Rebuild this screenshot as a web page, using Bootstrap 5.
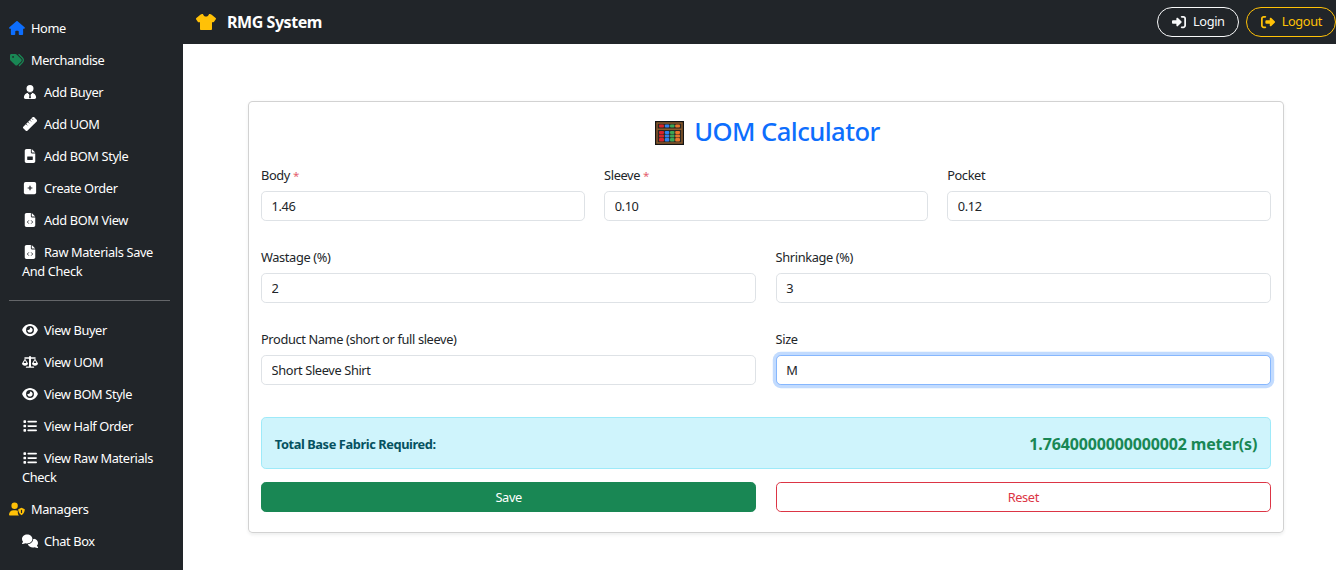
<!DOCTYPE html>
<html lang="en">
<head>
<meta charset="utf-8">
<title>RMG System</title>
<link href="https://cdn.jsdelivr.net/npm/bootstrap@5.3.0/dist/css/bootstrap.min.css" rel="stylesheet">
<style>
html{font-size:12.8px}
body{font-family:"Noto Sans","Open Sans","Liberation Sans",sans-serif;font-size:1rem;color:#212529;background:#fff}
.app-shell{display:flex;align-items:flex-start}
.side-panel{width:183px;flex:none;padding:12.8px 13px 12px 9px;color:#fff}
.side-link{display:block;color:#fff;text-decoration:none;padding:6.4px 0;line-height:19.2px;letter-spacing:-.37px}
.side-sub{padding-left:13px}
.ico{display:inline-block;width:16px;height:14px;margin-right:6px;vertical-align:-2px;fill:currentColor}
.side-rule{margin:12px 0 13.6px;border-color:#fff;opacity:.3}
.main-col{flex:1;min-width:0}
.top-bar{height:44px;padding:0 0 0 13px}
.brand-text{font-size:16px;font-weight:700;color:#fff;letter-spacing:-.45px}
.brand-ico{width:20px;height:16px;margin-right:11px;fill:#ffc107;vertical-align:-2px}
.btn-round{border-radius:50rem;height:30.4px;padding:0 13px;display:inline-flex;align-items:center;letter-spacing:-.4px}
.btn-round .ico{margin-right:6px}
.bar-actions{gap:7px}
.page-area{padding:57px 52px 0 65px}
.calc-card{padding:12.8px 12px 20px}
.calc-title{font-size:25.6px;font-weight:500;line-height:34px;margin-bottom:17px;padding-left:3px;color:#0d6efd;letter-spacing:-.55px}
.abacus{width:29px;height:24px;margin-right:10px;vertical-align:-4px}
.calc-label{margin-bottom:6.4px;letter-spacing:-.37px}
.calc-row{margin-bottom:26.4px}
.req{color:#e4606d;font-size:.9em}
.form-control{letter-spacing:-.37px;color:#212529;height:30px;min-height:30px}
.is-focus{border-color:#86b7fe;box-shadow:0 0 0 .25rem rgba(13,110,253,.25)}
.result-box{margin-top:32px;display:flex;justify-content:space-between;align-items:center;height:52px;padding-top:0;padding-bottom:0}
.result-key{font-weight:700;letter-spacing:-.4px;color:#055160;padding-top:2px}
.result-val{font-size:16px;font-weight:700;color:#198754;letter-spacing:-.15px;padding-top:1px}
.btn{letter-spacing:-.37px}
.row-last .btn{height:30px;padding-top:1px;padding-bottom:0}
</style>
</head>
<body>
<svg width="0" height="0" class="d-none">
<symbol id="i-house" viewBox="0 0 576 512"><path d="M575.8 255.5c0 18-15 32.100-32 32.100h-32l.7 160.200c0 2.700-.2 5.400-.5 8.100V472c0 22.100-17.900 40-40 40H456c-1.100 0-2.200 0-3.300-.1c-1.400 .1-2.800 .1-4.200 .1H392c-22.100 0-40-17.900-40-40V384c0-17.700-14.300-32-32-32H256c-17.700 0-32 14.300-32 32v88c0 22.100-17.900 40-40 40H128.100c-1.500 0-3-.1-4.500-.2c-1.200 .1-2.400 .2-3.600 .2H104c-22.100 0-40-17.900-40-40V360c0-.9 0-1.900 .1-2.800V287.600H32c-18 0-32-14-32-32.100c0-9 3-17 10-24L266.400 8c7-7 15-8 22-8s15 2 21 7L564.800 231.500c8 7 12 15 11 24z"/></symbol>
<symbol id="i-tags" viewBox="0 0 512 512"><path d="M345 39.100L472.800 168.400c52.400 53 52.400 138.200 0 191.200L360.800 472.900c-9.300 9.400-24.500 9.500-33.900 .2s-9.500-24.500-.2-33.900L438.600 325.900c33.900-34.300 33.900-89.400 0-123.700L310.900 72.900c-9.300-9.400-9.200-24.600 .2-33.900s24.600-9.200 33.900 .2zM0 229.500V80C0 53.500 21.500 32 48 32H197.500c17 0 33.300 6.700 45.300 18.700l168 168c25 25 25 65.500 0 90.500L277.300 442.700c-25 25-65.500 25-90.500 0l-168-168C6.700 262.700 0 246.500 0 229.500zM144 144a32 32 0 1 0 -64 0 32 32 0 1 0 64 0z"/></symbol>
<symbol id="i-user" viewBox="0 0 448 512"><path d="M224 256a128 128 0 1 0 0-256 128 128 0 1 0 0 256zM60 512c-33 0-60-27-60-60 0-90 70-164 158-172h132c88 8 158 82 158 172 0 33-27 60-60 60z"/><path d="M150 292l74 70 74-70M224 362l-22 110h44z" stroke="#212529" stroke-width="26" fill="#212529"/></symbol>
<symbol id="i-ruler" viewBox="0 0 512 512"><path d="M12 352 352 12c16-16 42-16 58 0l90 90c16 16 16 42 0 58L160 500c-16 16-42 16-58 0l-90-90c-16-16-16-42 0-58z"/><path d="M110 254l50 50M180 184l50 50M250 114l50 50M320 54l50 50" stroke="#212529" stroke-width="26" fill="none"/></symbol>
<symbol id="i-file" viewBox="0 0 384 512"><path d="M64 0C28.700 0 0 28.700 0 64V448c0 35.300 28.700 64 64 64H320c35.300 0 64-28.700 64-64V160H256c-17.700 0-32-14.300-32-32V0H64zM256 0V128H384L256 0z"/><rect x="90" y="270" width="204" height="130" rx="14" fill="#212529"/></symbol>
<symbol id="i-plus" viewBox="0 0 448 512"><rect y="32" width="448" height="448" rx="64"/><path d="M224 170v172M138 256h172" stroke="#212529" stroke-width="44" fill="none"/></symbol>
<symbol id="i-code" viewBox="0 0 384 512"><path d="M64 0C28.700 0 0 28.700 0 64V448c0 35.300 28.700 64 64 64H320c35.300 0 64-28.700 64-64V160H256c-17.700 0-32-14.300-32-32V0H64zM256 0V128H384L256 0z"/><path d="M150 270l-56 60 56 60M234 270l56 60-56 60" stroke="#212529" stroke-width="30" fill="none"/></symbol>
<symbol id="i-eye" viewBox="0 0 576 512"><path d="M288 32c-80.800 0-145.500 36.800-192.600 80.600C48.600 156 17.300 208 2.500 243.700c-3.300 7.900-3.300 16.700 0 24.600C17.300 304 48.600 356 95.400 399.400C142.500 443.200 207.200 480 288 480s145.500-36.800 192.600-80.600c46.800-43.500 78.100-95.400 93-131.100c3.300-7.900 3.300-16.700 0-24.600c-14.900-35.700-46.200-87.700-93-131.100C433.500 68.800 368.800 32 288 32zM144 256a144 144 0 1 1 288 0 144 144 0 1 1 -288 0zm144-64c0 35.300-28.700 64-64 64c-7.100 0-13.900-1.200-20.300-3.300c-5.500-1.800-11.900 1.600-11.700 7.400c.3 6.900 1.300 13.800 3.200 20.700c13.700 51.200 66.400 81.600 117.600 67.900s81.600-66.400 67.900-117.600c-11.100-41.500-47.800-69.400-88.600-71.100c-5.800-.2-9.200 6.100-7.400 11.700c2.100 6.400 3.300 13.200 3.300 20.300z"/></symbol>
<symbol id="i-scale" viewBox="0 0 640 512"><path d="M280 30h80v410h100c15 0 25 10 25 30v20H155v-20c0-20 10-30 25-30h100z"/><path d="M120 70h400c18 0 30 12 30 28s-12 28-30 28H120c-18 0-30-12-30-28s12-28 30-28z"/><path d="M120 120 0 320c0 50 55 84 120 84s120-34 120-84zm0 70 56 110H64zM520 120 400 320c0 50 55 84 120 84s120-34 120-84zm0 70 56 110H464z" fill-rule="evenodd"/></symbol>
<symbol id="i-list" viewBox="0 0 512 512"><path d="M40 48C26.700 48 16 58.700 16 72v48c0 13.300 10.700 24 24 24H88c13.300 0 24-10.700 24-24V72c0-13.300-10.700-24-24-24H40zM192 64c-17.700 0-32 14.300-32 32s14.300 32 32 32H480c17.700 0 32-14.300 32-32s-14.300-32-32-32H192zm0 160c-17.700 0-32 14.300-32 32s14.300 32 32 32H480c17.700 0 32-14.300 32-32s-14.300-32-32-32H192zm0 160c-17.700 0-32 14.300-32 32s14.300 32 32 32H480c17.700 0 32-14.300 32-32s-14.300-32-32-32H192zM16 232v48c0 13.300 10.700 24 24 24H88c13.300 0 24-10.700 24-24V232c0-13.300-10.700-24-24-24H40c-13.300 0-24 10.700-24 24zM40 368c-13.300 0-24 10.700-24 24v48c0 13.300 10.700 24 24 24H88c13.300 0 24-10.700 24-24V392c0-13.300-10.700-24-24-24H40z"/></symbol>
<symbol id="i-shield" viewBox="0 0 640 512"><path d="M224 256a128 128 0 1 0 0-256 128 128 0 1 0 0 256zM178 304h92c30 0 58 8 82 22v66c0 48 18 90 50 120H30c-17 0-30-13-30-30 0-98 80-178 178-178z"/><path d="M500 210l130 52c6 80-30 190-130 240-100-50-136-160-130-240z"/><path d="M500 290v130" stroke="#212529" stroke-width="46" fill="none"/></symbol>
<symbol id="i-chat" viewBox="0 0 640 512"><path d="M208 352c115 0 208-78 208-176S323 0 208 0 0 78 0 176c0 40 15 76 42 106-12 32-38 60-38 60-6 6-7 14-4 22s10 12 18 12c46 0 84-15 110-32 25 5 52 8 80 8z"/><path d="M448 176c0 112-99 199-216 207 25 76 105 129 200 129 28 0 55-3 80-10 26 17 64 32 110 32 8 0 15-4 18-12s2-16-4-22c0 0-26-28-38-60 27-30 42-66 42-106 0-82-66-150-156-172 2 5 2 9 2 14z"/></symbol>
<symbol id="i-shirt" viewBox="0 0 640 512"><path d="M211.800 0c7.800 0 14.300 5.700 16.700 13.200C240.800 51.900 277.100 80 320 80s79.200-28.100 91.500-66.800C413.900 5.700 420.400 0 428.200 0h12.600c22.500 0 44.200 8 61.200 22.600L628.500 131c12.100 10.300 14.400 27.900 5.400 40.900l-56 80c-5.500 8-14.200 12.800-23.900 12.600L512 263v215c0 19.900-16.100 34-36 34H164c-19.900 0-36-14.100-36-34V263l-42.100 1.600c-9.600 .4-18.700-4.400-24-12.500l-56-80c-9-13-6.700-30.600 5.400-40.900L138 22.600C155 8 176.700 0 199.200 0h12.600z"/></symbol>
<symbol id="i-login" viewBox="0 0 512 512"><path d="M217.900 105.900L340.700 228.700c7.200 7.200 11.300 17.100 11.300 27.300s-4.100 20.100-11.300 27.300L217.900 406.100c-6.400 6.400-15 9.900-24 9.900c-18.700 0-33.900-15.200-33.900-33.900l0-62.100L32 320c-17.700 0-32-14.300-32-32l0-64c0-17.700 14.300-32 32-32l128 0 0-62.100c0-18.700 15.200-33.900 33.900-33.900c9 0 17.600 3.600 24 9.900zM352 416l64 0c17.700 0 32-14.300 32-32l0-256c0-17.700-14.300-32-32-32l-64 0c-17.700 0-32-14.300-32-32s14.300-32 32-32l64 0c53 0 96 43 96 96l0 256c0 53-43 96-96 96l-64 0c-17.700 0-32-14.300-32-32s14.300-32 32-32z"/></symbol>
<symbol id="i-logout" viewBox="0 0 512 512"><path d="M377.900 105.900L500.700 228.700c7.200 7.200 11.300 17.100 11.300 27.300s-4.100 20.100-11.300 27.300L377.900 406.100c-6.400 6.400-15 9.900-24 9.900c-18.700 0-33.900-15.200-33.900-33.900l0-62.100-128 0c-17.700 0-32-14.300-32-32l0-64c0-17.700 14.300-32 32-32l128 0 0-62.100c0-18.700 15.200-33.900 33.900-33.900c9 0 17.600 3.600 24 9.900zM160 96L96 96c-17.700 0-32 14.300-32 32l0 256c0 17.700 14.300 32 32 32l64 0c17.700 0 32 14.300 32 32s-14.300 32-32 32l-64 0c-53 0-96-43-96-96L0 128C0 75 43 32 96 32l64 0c17.700 0 32 14.300 32 32s-14.300 32-32 32z"/></symbol>
</svg>

<div class="app-shell">
  <nav class="side-panel bg-dark">
    <a class="side-link" href="#"><svg class="ico text-primary"><use href="#i-house"/></svg>Home</a>
    <a class="side-link" href="#"><svg class="ico text-success"><use href="#i-tags"/></svg>Merchandise</a>
    <div class="side-sub">
      <a class="side-link" href="#"><svg class="ico"><use href="#i-user"/></svg>Add Buyer</a>
      <a class="side-link" href="#"><svg class="ico"><use href="#i-ruler"/></svg>Add UOM</a>
      <a class="side-link" href="#"><svg class="ico"><use href="#i-file"/></svg>Add BOM Style</a>
      <a class="side-link" href="#"><svg class="ico"><use href="#i-plus"/></svg>Create Order</a>
      <a class="side-link" href="#"><svg class="ico"><use href="#i-code"/></svg>Add BOM View</a>
      <a class="side-link" href="#"><svg class="ico"><use href="#i-code"/></svg>Raw Materials Save And Check</a>
    </div>
    <hr class="side-rule">
    <div class="side-sub">
      <a class="side-link" href="#"><svg class="ico"><use href="#i-eye"/></svg>View Buyer</a>
      <a class="side-link" href="#"><svg class="ico"><use href="#i-scale"/></svg>View UOM</a>
      <a class="side-link" href="#"><svg class="ico"><use href="#i-eye"/></svg>View BOM Style</a>
      <a class="side-link" href="#"><svg class="ico"><use href="#i-list"/></svg>View Half Order</a>
      <a class="side-link" href="#"><svg class="ico"><use href="#i-list"/></svg>View Raw Materials Check</a>
    </div>
    <a class="side-link" href="#"><svg class="ico text-warning"><use href="#i-shield"/></svg>Managers</a>
    <div class="side-sub">
      <a class="side-link" href="#"><svg class="ico"><use href="#i-chat"/></svg>Chat Box</a>
    </div>
  </nav>
  <div class="main-col">
    <header class="top-bar navbar navbar-dark bg-dark d-flex justify-content-between align-items-center">
      <a class="navbar-brand p-0 m-0 d-flex align-items-center" href="#"><svg class="brand-ico"><use href="#i-shirt"/></svg><span class="brand-text">RMG System</span></a>
      <div class="d-flex bar-actions">
        <a class="btn btn-outline-light btn-round" href="#"><svg class="ico"><use href="#i-login"/></svg>Login</a>
        <a class="btn btn-outline-warning btn-round" href="#"><svg class="ico"><use href="#i-logout"/></svg>Logout</a>
      </div>
    </header>
    <main class="page-area">
      <div class="card shadow-sm calc-card">
        <h2 class="calc-title text-center">
          <svg class="abacus" viewBox="0 0 29 24">
            <rect width="29" height="24" fill="#141414"/>
            <rect x="2" y="2" width="25" height="20" fill="#2a2622" stroke="#8a5a2b" stroke-width="1.500"/>
            <rect x="2" y="7.500" width="25" height="1.500" fill="#8a5a2b"/>
            <g fill="#d8232a"><rect x="4" y="3.500" width="5" height="3" rx="1"/><rect x="4" y="10" width="5" height="3" rx="1"/><rect x="4" y="13.500" width="5" height="3" rx="1"/><rect x="4" y="17" width="5" height="3.500" rx="1"/></g>
            <g fill="#2f80ed"><rect x="9.800" y="3.500" width="4.500" height="3" rx="1"/><rect x="9.800" y="10" width="4.500" height="3" rx="1"/><rect x="9.800" y="13.500" width="4.500" height="3" rx="1"/><rect x="9.800" y="17" width="4.500" height="3.500" rx="1"/></g>
            <g fill="#3aa655"><rect x="15" y="3.500" width="4.500" height="3" rx="1"/><rect x="15" y="10" width="4.500" height="3" rx="1"/><rect x="15" y="13.500" width="4.500" height="3" rx="1"/><rect x="15" y="17" width="4.500" height="3.500" rx="1"/></g>
            <g fill="#e8762c"><rect x="20.200" y="3.500" width="4.800" height="3" rx="1"/><rect x="20.200" y="10" width="4.800" height="3" rx="1"/><rect x="20.200" y="13.500" width="4.800" height="3" rx="1"/><rect x="20.200" y="17" width="4.800" height="3.500" rx="1"/></g>
          </svg>UOM Calculator</h2>
        <div class="row gx-4 calc-row">
          <div class="col-4"><label class="form-label calc-label">Body <span class="req">*</span></label><input class="form-control" value="1.46"></div>
          <div class="col-4"><label class="form-label calc-label">Sleeve <span class="req">*</span></label><input class="form-control" value="0.10"></div>
          <div class="col-4"><label class="form-label calc-label">Pocket</label><input class="form-control" value="0.12"></div>
        </div>
        <div class="row gx-4 calc-row">
          <div class="col-6"><label class="form-label calc-label">Wastage (%)</label><input class="form-control" value="2"></div>
          <div class="col-6"><label class="form-label calc-label">Shrinkage (%)</label><input class="form-control" value="3"></div>
        </div>
        <div class="row gx-4">
          <div class="col-6"><label class="form-label calc-label">Product Name (short or full sleeve)</label><input class="form-control" value="Short Sleeve Shirt"></div>
          <div class="col-6"><label class="form-label calc-label">Size</label><input class="form-control is-focus" value="M"></div>
        </div>
        <div class="alert alert-info result-box">
          <span class="result-key">Total Base Fabric Required:</span>
          <span class="result-val">1.7640000000000002 meter(s)</span>
        </div>
        <div class="row gx-4 row-last">
          <div class="col-6"><button class="btn btn-success w-100">Save</button></div>
          <div class="col-6"><button class="btn btn-outline-danger w-100">Reset</button></div>
        </div>
      </div>
    </main>
  </div>
</div>
<script src="https://cdn.jsdelivr.net/npm/bootstrap@5.3.0/dist/js/bootstrap.bundle.min.js"></script>
</body>
</html>
